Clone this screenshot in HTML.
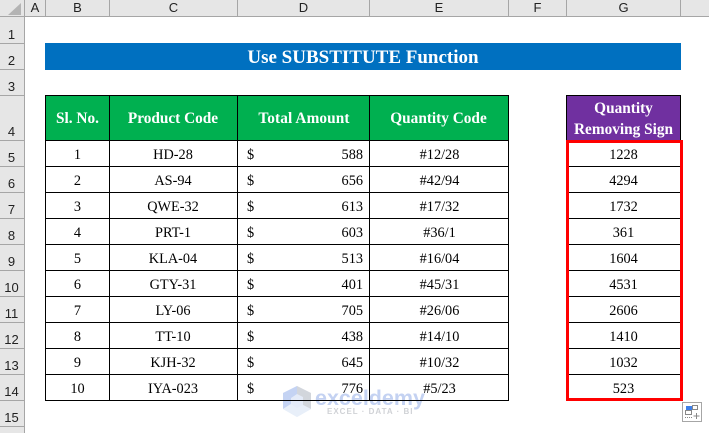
<!DOCTYPE html>
<html><head><meta charset="utf-8">
<style>
html,body{margin:0;padding:0;background:#fff}
#p{position:relative;width:709px;height:433px;overflow:hidden;background:#fff;font-family:"Liberation Serif",serif;color:#000}
#p div{position:absolute;box-sizing:border-box}
.ch,.rh{font-family:"Liberation Sans",sans-serif;font-size:13px;color:#222;text-align:center}
.ch{top:0;height:17px;line-height:16px;background:#e6e6e6;border-right:1px solid #a6a6a6;border-bottom:1px solid #a6a6a6}
.rh{left:0;width:25px;background:#e6e6e6;border-right:1px solid #a6a6a6;border-bottom:1px solid #a6a6a6}
.rh span{position:absolute;left:0;right:1px;bottom:-1px;line-height:18px}
.hl{background:#000;height:1px}
.vl{background:#000;width:1px}
.t{font-size:14.3px;text-align:center;height:26px;line-height:28px;white-space:nowrap}
.h{font-size:15.3px;font-weight:bold;color:#fff;text-align:center;white-space:nowrap;line-height:20px}
</style></head><body><div id="p">
<div class="ch" style="left:0;width:25px"></div>
<svg style="position:absolute;left:8px;top:3px" width="14" height="12"><path d="M13 0V12H0Z" fill="#b4b4b4"/></svg>
<div class="ch" style="left:25px;width:21px">A</div>
<div class="ch" style="left:46px;width:64px">B</div>
<div class="ch" style="left:110px;width:128px">C</div>
<div class="ch" style="left:238px;width:132px">D</div>
<div class="ch" style="left:370px;width:139px">E</div>
<div class="ch" style="left:509px;width:58px">F</div>
<div class="ch" style="left:567px;width:114px">G</div>
<div class="ch" style="left:681px;width:28px;border-right:0"></div>

<div class="rh" style="top:17px;height:27px"><span>1</span></div>
<div class="rh" style="top:44px;height:26px"><span>2</span></div>
<div class="rh" style="top:70px;height:26px"><span>3</span></div>
<div class="rh" style="top:96px;height:45px"><span>4</span></div>
<div class="rh" style="top:141px;height:26px"><span>5</span></div>
<div class="rh" style="top:167px;height:26px"><span>6</span></div>
<div class="rh" style="top:193px;height:26px"><span>7</span></div>
<div class="rh" style="top:219px;height:26px"><span>8</span></div>
<div class="rh" style="top:245px;height:26px"><span>9</span></div>
<div class="rh" style="top:271px;height:26px"><span>10</span></div>
<div class="rh" style="top:297px;height:26px"><span>11</span></div>
<div class="rh" style="top:323px;height:26px"><span>12</span></div>
<div class="rh" style="top:349px;height:26px"><span>13</span></div>
<div class="rh" style="top:375px;height:26px"><span>14</span></div>
<div class="rh" style="top:401px;height:26px"><span>15</span></div>
<div class="rh" style="top:427px;height:6px;border-bottom:0"></div>

<div style="left:45px;top:43px;width:636px;height:27px;background:#0070c0;color:#fff;font-weight:bold;font-size:19px;text-align:center;line-height:29px;">Use SUBSTITUTE Function</div>

<div style="left:45px;top:95px;width:464px;height:45px;background:#00b050"></div>
<div style="left:566px;top:95px;width:115px;height:45px;background:#7030a0"></div>
<div class="h" style="left:45px;width:65px;top:109px">Sl. No.</div>
<div class="h" style="left:109px;width:128px;top:109px">Product Code</div>
<div class="h" style="left:238px;width:132px;top:109px;letter-spacing:.1px">Total Amount</div>
<div class="h" style="left:369px;width:139px;top:109px">Quantity Code</div>
<div class="h" style="left:566px;width:115px;top:99px">Quantity</div>
<div class="h" style="left:566px;width:115px;top:120px">Removing Sign</div>

<div class="t" style="left:45px;width:65px;top:141px">1</div><div class="t" style="left:109px;width:128px;top:141px">HD-28</div><div class="t" style="left:247px;top:141px">$</div><div class="t" style="left:320px;width:43px;text-align:right;top:141px;">588</div><div class="t" style="left:370px;width:139px;top:141px">#12/28</div><div class="t" style="left:566px;width:115px;top:141px">1228</div>
<div class="t" style="left:45px;width:65px;top:167px">2</div><div class="t" style="left:109px;width:128px;top:167px">AS-94</div><div class="t" style="left:247px;top:167px">$</div><div class="t" style="left:320px;width:43px;text-align:right;top:167px;">656</div><div class="t" style="left:370px;width:139px;top:167px">#42/94</div><div class="t" style="left:566px;width:115px;top:167px">4294</div>
<div class="t" style="left:45px;width:65px;top:193px">3</div><div class="t" style="left:109px;width:128px;top:193px">QWE-32</div><div class="t" style="left:247px;top:193px">$</div><div class="t" style="left:320px;width:43px;text-align:right;top:193px;">613</div><div class="t" style="left:370px;width:139px;top:193px">#17/32</div><div class="t" style="left:566px;width:115px;top:193px">1732</div>
<div class="t" style="left:45px;width:65px;top:219px">4</div><div class="t" style="left:109px;width:128px;top:219px">PRT-1</div><div class="t" style="left:247px;top:219px">$</div><div class="t" style="left:320px;width:43px;text-align:right;top:219px;">603</div><div class="t" style="left:370px;width:139px;top:219px">#36/1</div><div class="t" style="left:566px;width:115px;top:219px">361</div>
<div class="t" style="left:45px;width:65px;top:245px">5</div><div class="t" style="left:109px;width:128px;top:245px">KLA-04</div><div class="t" style="left:247px;top:245px">$</div><div class="t" style="left:320px;width:43px;text-align:right;top:245px;">513</div><div class="t" style="left:370px;width:139px;top:245px">#16/04</div><div class="t" style="left:566px;width:115px;top:245px">1604</div>
<div class="t" style="left:45px;width:65px;top:271px">6</div><div class="t" style="left:109px;width:128px;top:271px">GTY-31</div><div class="t" style="left:247px;top:271px">$</div><div class="t" style="left:320px;width:43px;text-align:right;top:271px;">401</div><div class="t" style="left:370px;width:139px;top:271px">#45/31</div><div class="t" style="left:566px;width:115px;top:271px">4531</div>
<div class="t" style="left:45px;width:65px;top:297px">7</div><div class="t" style="left:109px;width:128px;top:297px">LY-06</div><div class="t" style="left:247px;top:297px">$</div><div class="t" style="left:320px;width:43px;text-align:right;top:297px;">705</div><div class="t" style="left:370px;width:139px;top:297px">#26/06</div><div class="t" style="left:566px;width:115px;top:297px">2606</div>
<div class="t" style="left:45px;width:65px;top:323px">8</div><div class="t" style="left:109px;width:128px;top:323px">TT-10</div><div class="t" style="left:247px;top:323px">$</div><div class="t" style="left:320px;width:43px;text-align:right;top:323px;">438</div><div class="t" style="left:370px;width:139px;top:323px">#14/10</div><div class="t" style="left:566px;width:115px;top:323px">1410</div>
<div class="t" style="left:45px;width:65px;top:349px">9</div><div class="t" style="left:109px;width:128px;top:349px">KJH-32</div><div class="t" style="left:247px;top:349px">$</div><div class="t" style="left:320px;width:43px;text-align:right;top:349px;">645</div><div class="t" style="left:370px;width:139px;top:349px">#10/32</div><div class="t" style="left:566px;width:115px;top:349px">1032</div>
<div class="t" style="left:45px;width:65px;top:375px">10</div><div class="t" style="left:109px;width:128px;top:375px">IYA-023</div><div class="t" style="left:247px;top:375px">$</div><div class="t" style="left:320px;width:43px;text-align:right;top:375px;">776</div><div class="t" style="left:370px;width:139px;top:375px">#5/23</div><div class="t" style="left:566px;width:115px;top:375px">523</div>

<div class="hl" style="left:45px;width:464px;top:95px"></div>
<div class="hl" style="left:45px;width:464px;top:140px"></div>
<div class="hl" style="left:45px;width:464px;top:166px"></div>
<div class="hl" style="left:45px;width:464px;top:192px"></div>
<div class="hl" style="left:45px;width:464px;top:218px"></div>
<div class="hl" style="left:45px;width:464px;top:244px"></div>
<div class="hl" style="left:45px;width:464px;top:270px"></div>
<div class="hl" style="left:45px;width:464px;top:296px"></div>
<div class="hl" style="left:45px;width:464px;top:322px"></div>
<div class="hl" style="left:45px;width:464px;top:348px"></div>
<div class="hl" style="left:45px;width:464px;top:374px"></div>
<div class="hl" style="left:45px;width:464px;top:400px"></div>
<div class="vl" style="left:45px;top:95px;height:306px"></div>
<div class="vl" style="left:109px;top:95px;height:306px"></div>
<div class="vl" style="left:237px;top:95px;height:306px"></div>
<div class="vl" style="left:369px;top:95px;height:306px"></div>
<div class="vl" style="left:508px;top:95px;height:306px"></div>

<div class="hl" style="left:566px;width:115px;top:95px"></div>
<div class="vl" style="left:566px;top:95px;height:306px"></div>
<div class="vl" style="left:680px;top:95px;height:306px"></div>
<div class="hl" style="left:566px;width:115px;top:166px"></div>
<div class="hl" style="left:566px;width:115px;top:192px"></div>
<div class="hl" style="left:566px;width:115px;top:218px"></div>
<div class="hl" style="left:566px;width:115px;top:244px"></div>
<div class="hl" style="left:566px;width:115px;top:270px"></div>
<div class="hl" style="left:566px;width:115px;top:296px"></div>
<div class="hl" style="left:566px;width:115px;top:322px"></div>
<div class="hl" style="left:566px;width:115px;top:348px"></div>
<div class="hl" style="left:566px;width:115px;top:374px"></div>
<div style="left:566px;top:140px;width:117px;height:261px;border:3px solid #f00"></div>

<svg style="position:absolute;left:282px;top:385px;mix-blend-mode:multiply" width="30" height="33" viewBox="0 0 30 33"><path d="M15 1L29 8V24L15 32L1 24V8Z" fill="#e4ebf8"/><path d="M15 1L29 8V24L21 20V12L15 9Z" fill="#d2d6dc"/><path d="M1 8L15 1V9L9 13V19L1 24Z" fill="#c4d3f3"/><path d="M1 24L9 19L15 23L21 20L29 24L15 32Z" fill="#e8eff9"/></svg>
<div style="left:315px;top:386px;font-family:'Liberation Sans',sans-serif;font-weight:bold;font-size:21.5px;line-height:24px;color:#c4d2f2;mix-blend-mode:multiply;white-space:nowrap">exceldemy</div>
<div style="left:327px;top:407px;font-family:'Liberation Sans',sans-serif;font-weight:bold;font-size:8px;line-height:9px;color:#d0d2d6;letter-spacing:1.0px;white-space:nowrap;mix-blend-mode:multiply">EXCEL · DATA · BI</div>

<svg style="position:absolute;left:682px;top:402px" width="20" height="20" viewBox="0 0 20 20"><rect x=".5" y=".5" width="19" height="19" fill="#fff" stroke="#a6a6a6"/><rect x="4" y="4" width="6" height="4" fill="#3f7fe8"/><rect x="10.500" y="3.500" width="5" height="4" fill="#fff" stroke="#888"/><rect x="3.500" y="8.500" width="6" height="4" fill="#fff" stroke="#888"/><path d="M3 15.500h7" stroke="#888" stroke-dasharray="1 1"/><path d="M14.500 11v6M11.500 14h6" stroke="#888"/></svg>
</div></body></html>
